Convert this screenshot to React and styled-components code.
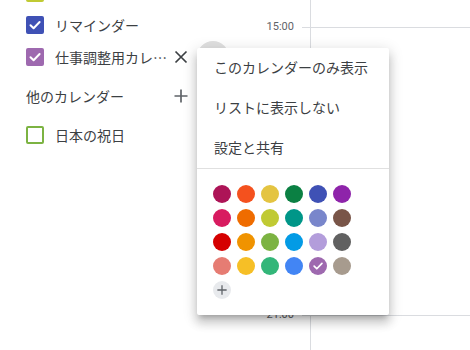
import React from 'react';
import styled, { createGlobalStyle } from 'styled-components';

const GlobalStyle = createGlobalStyle`
  html, body { margin: 0; padding: 0; background: #fff; }
  body { font-family: "Noto Sans CJK JP", Roboto, sans-serif; }
  * { box-sizing: border-box; }
`;

const Page = styled.div`
  position: relative;
  display: flex;
  width: 470px;
  height: 350px;
  overflow: hidden;
  background: #fff;
`;

const Sidebar = styled.aside`
  width: 256px;
  flex: none;
`;

const CalendarList = styled.ul`
  list-style: none;
  margin: ${p => (p.$offset ? '-23px' : '0')} 0 0;
  padding: 0;
`;

const Row = styled.li`
  display: flex;
  align-items: center;
  height: 32px;
  padding: 0 27px 0 26px;
`;

const Box = styled.span`
  flex: none;
  width: 18px;
  height: 18px;
  border-radius: 2px;
  display: flex;
  align-items: center;
  justify-content: center;
  border: 2px solid ${p => p.$color};
  background: ${p => (p.$checked ? p.$color : 'transparent')};
`;

const Label = styled.span`
  flex: 1;
  min-width: 0;
  margin-left: 11px;
  padding-bottom: 1px;
  font-size: 14px;
  line-height: 20px;
  color: #3c4043;
  white-space: nowrap;
  overflow: hidden;
  text-overflow: ellipsis;
`;

const IconButton = styled.span`
  flex: none;
  width: ${p => p.$size}px;
  height: ${p => p.$size}px;
  margin-right: ${p => p.$gap || 0}px;
  border-radius: 50%;
  display: flex;
  align-items: center;
  justify-content: center;
  background: ${p => p.$bg || 'transparent'};
  color: #5f6368;
`;

const SectionHeader = styled.div`
  display: flex;
  align-items: center;
  height: 46px;
  padding: 0 27px 0 26px;
  font-size: 14px;
  color: #3c4043;
`;

const HeaderText = styled.span`
  flex: 1;
  line-height: 20px;
  padding-bottom: 1px;
`;

const Gutter = styled.div`
  width: 54px;
  flex: none;
  display: flex;
  flex-direction: column;
  align-items: flex-end;
  padding-top: 20px;
  gap: 274px;
`;

const TimeMark = styled.div`
  display: flex;
  align-items: center;
  height: 14px;
`;

const TimeLabel = styled.span`
  font-family: Roboto, "Liberation Sans", sans-serif;
  font-size: 11px;
  line-height: 14px;
  color: #5f6368;
  margin-right: 8px;
`;

const Tick = styled.span`
  width: 8px;
  height: 1px;
  background: #dadce0;
`;

const Grid = styled.div`
  flex: 1;
  border-left: 1px solid #dadce0;
  padding-top: 27px;
`;

const HourLine = styled.div`
  height: 288px;
  border-top: 1px solid #dadce0;
`;

const Menu = styled.div`
  position: absolute;
  left: 197px;
  top: 48px;
  width: 192px;
  background: #fff;
  border-radius: 2px;
  box-shadow: 0 8px 10px 1px rgba(0, 0, 0, 0.14), 0 3px 14px 2px rgba(0, 0, 0, 0.12),
    0 5px 5px -3px rgba(0, 0, 0, 0.2);
`;

const MenuItem = styled.div`
  height: 40px;
  display: flex;
  align-items: center;
  padding: 0 17px 2px;
  font-size: 14px;
  color: #3c4043;
  white-space: nowrap;
`;

const Divider = styled.div`
  height: 1px;
  background: #e0e0e0;
`;

const Palette = styled.div`
  display: grid;
  grid-template-columns: repeat(6, 18px);
  grid-auto-rows: 18px;
  gap: 6px;
  padding: 16px;
`;

const Swatch = styled.span`
  width: 18px;
  height: 18px;
  border-radius: 50%;
  background: ${p => p.$color};
  display: flex;
  align-items: center;
  justify-content: center;
`;

const AddColor = styled.span`
  width: 18px;
  height: 18px;
  border-radius: 50%;
  background: #e8eaed;
  display: flex;
  align-items: center;
  justify-content: center;
`;

const Check = ({ size = 14 }) => (
  <svg width={size} height={size} viewBox="0 0 14 14">
    <path d="M2.5 7.2 L5.6 10.2 L11.6 4" fill="none" stroke="#fff" strokeWidth="2" strokeLinecap="round" strokeLinejoin="round" />
  </svg>
);

const CloseIcon = () => (
  <svg width="14" height="14" viewBox="0 0 14 14">
    <path d="M1.5 1.5 L12.5 12.5 M12.5 1.5 L1.5 12.5" stroke="#3c4043" strokeWidth="1.7" />
  </svg>
);

const PlusIcon = ({ size = 14, color = '#5f6368', w = 1.7 }) => (
  <svg width={size} height={size} viewBox="0 0 14 14">
    <path d="M7 0.5 V13.5 M0.5 7 H13.5" stroke={color} strokeWidth={w} />
  </svg>
);

const colors = [
  '#AD1457', '#F4511E', '#E4C441', '#0B8043', '#3F51B5', '#8E24AA',
  '#D81B60', '#EF6C00', '#C0CA33', '#009688', '#7986CB', '#795548',
  '#D50000', '#F09300', '#7CB342', '#039BE5', '#B39DDB', '#616161',
  '#E67C73', '#F6BF26', '#33B679', '#4285F4', '#9E69AF', '#A79B8E',
];

export default function App() {
  return (
    <Page>
      <GlobalStyle />
      <Sidebar>
        <CalendarList $offset>
          <Row>
            <Box $color="#C0CA33" $checked><Check /></Box>
          </Row>
          <Row>
            <Box $color="#3F51B5" $checked><Check /></Box>
            <Label>リマインダー</Label>
          </Row>
          <Row>
            <Box $color="#9E69AF" $checked><Check /></Box>
            <Label>仕事調整用カレンダー</Label>
            <IconButton $size={24} $gap={4}><CloseIcon /></IconButton>
            <IconButton $size={32} $bg="#e0e0e0" />
          </Row>
        </CalendarList>
        <SectionHeader>
          <HeaderText>他のカレンダー</HeaderText>
          <IconButton $size={24} $gap={36}><PlusIcon /></IconButton>
        </SectionHeader>
        <CalendarList>
          <Row>
            <Box $color="#7CB342" />
            <Label>日本の祝日</Label>
          </Row>
        </CalendarList>
      </Sidebar>
      <Gutter>
        <TimeMark><TimeLabel>15:00</TimeLabel><Tick /></TimeMark>
        <TimeMark><TimeLabel>21:00</TimeLabel><Tick /></TimeMark>
      </Gutter>
      <Grid>
        <HourLine />
        <HourLine />
      </Grid>
      <Menu>
        <MenuItem>このカレンダーのみ表示</MenuItem>
        <MenuItem>リストに表示しない</MenuItem>
        <MenuItem>設定と共有</MenuItem>
        <Divider />
        <Palette>
          {colors.map(c => (
            <Swatch key={c} $color={c}>{c === '#9E69AF' && <Check size={12} />}</Swatch>
          ))}
          <AddColor><PlusIcon size={10} color="#5f6368" w={1.8} /></AddColor>
        </Palette>
      </Menu>
    </Page>
  );
}
